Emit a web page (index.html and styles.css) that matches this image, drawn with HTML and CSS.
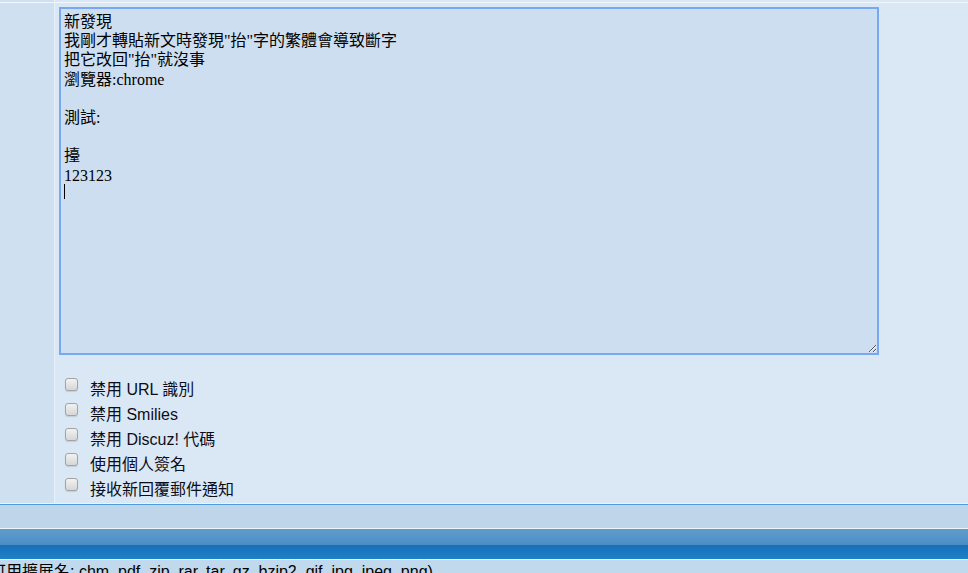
FILE: index.html
```html
<!DOCTYPE html>
<html lang="zh-Hant">
<head>
<meta charset="utf-8">
<title>發表回覆</title>
<link rel="stylesheet" href="styles.css">
</head>
<body>
<div class="page">
  <div class="row row-prev">
    <div class="cell-left"></div>
    <div class="cell-right"></div>
  </div>
  <div class="row row-main">
    <div class="cell-left"></div>
    <div class="cell-right">
      <div class="editor">
        <textarea class="message" name="message">新發現
我剛才轉貼新文時發現"抬"字的繁體會導致斷字
把它改回"抬"就沒事
瀏覽器:chrome

測試:

擡
123123
</textarea>
        <span class="caret"></span>
      </div>
      <ul class="options">
        <li class="option"><input class="check" type="checkbox" id="parseurloff"><label for="parseurloff">禁用 URL 識別</label></li>
        <li class="option"><input class="check" type="checkbox" id="smileyoff"><label for="smileyoff">禁用 Smilies</label></li>
        <li class="option"><input class="check" type="checkbox" id="bbcodeoff"><label for="bbcodeoff">禁用 Discuz! 代碼</label></li>
        <li class="option"><input class="check" type="checkbox" id="usesig"><label for="usesig">使用個人簽名</label></li>
        <li class="option"><input class="check" type="checkbox" id="emailnotify"><label for="emailnotify">接收新回覆郵件通知</label></li>
      </ul>
    </div>
  </div>
  <div class="band"></div>
  <div class="header"></div>
  <div class="note"><span class="note-text">可用擴展名: chm, pdf, zip, rar, tar, gz, bzip2, gif, jpg, jpeg, png)</span></div>
</div>
</body>
</html>
```
FILE: styles.css
```css
html, body {
  margin: 0;
  padding: 0;
}

body {
  background: #c1d9ec;
  font-family: "Liberation Sans", "Noto Sans CJK TC", sans-serif;
  color: #000;
  overflow: hidden;
}

.page {
  width: 968px;
}

.row {
  display: grid;
  grid-template-columns: 55px 1fr;
}

.cell-left {
  box-sizing: border-box;
  background: #cfe0f1;
  border-right: 1px solid #e9f1fa;
}

.cell-right {
  background: #dae8f5;
}

.row-prev {
  height: 2px;
}

.row-main {
  border-top: 1px solid #f0f6fc;
  border-bottom: 1px solid #edf4fb;
}

.row-main .cell-right {
  padding: 4px 0 0 4px;
}

.editor {
  position: relative;
  width: 820px;
}

.message {
  display: block;
  box-sizing: border-box;
  width: 820px;
  height: 348px;
  margin: 0;
  padding: 3px 3px 1px;
  border: 2px solid #79a8f2;
  background: #cddef0;
  color: #000;
  font-family: "Liberation Serif", "Noto Sans CJK TC", serif;
  font-size: 16px;
  line-height: 19.2px;
  outline: none;
  resize: both;
  overflow: hidden;
}

.caret {
  position: absolute;
  left: 5px;
  top: 177px;
  width: 1px;
  height: 15px;
  background: #000;
}

.options {
  list-style: none;
  margin: 23px 0 0 0;
  padding: 0;
}

.option {
  display: flex;
  align-items: flex-start;
  height: 25px;
  font-size: 16px;
  line-height: 24px;
  color: #0d0d1a;
}

.check {
  appearance: none;
  -webkit-appearance: none;
  box-sizing: border-box;
  width: 13px;
  height: 13px;
  margin: 0 12px 0 6px;
  border: 1px solid #a3a3a3;
  border-radius: 3px;
  background: linear-gradient(#f2f2f2, #d6d6d6);
  box-shadow: 0 1px 1px rgba(0, 0, 0, 0.12);
}

.band {
  height: 23px;
  background: #bfd6ea;
  border-top: 1px solid #4c9cde;
  border-bottom: 1px solid #eef5fb;
}

.header {
  height: 29px;
  border-top: 1px solid #4c9cde;
  border-bottom: 1px solid #e6f0f9;
  background: linear-gradient(to bottom, #5e9ccc 0, #4b8dc4 15px, #1670b8 15px, #1e80c8 100%);
}

.note {
  height: 40px;
  padding-top: 3px;
  background: #c1d9ec;
  font-size: 16px;
  line-height: 18px;
  white-space: nowrap;
  color: #000;
}

.note-text {
  display: inline-block;
  margin-left: -10px;
}
```
